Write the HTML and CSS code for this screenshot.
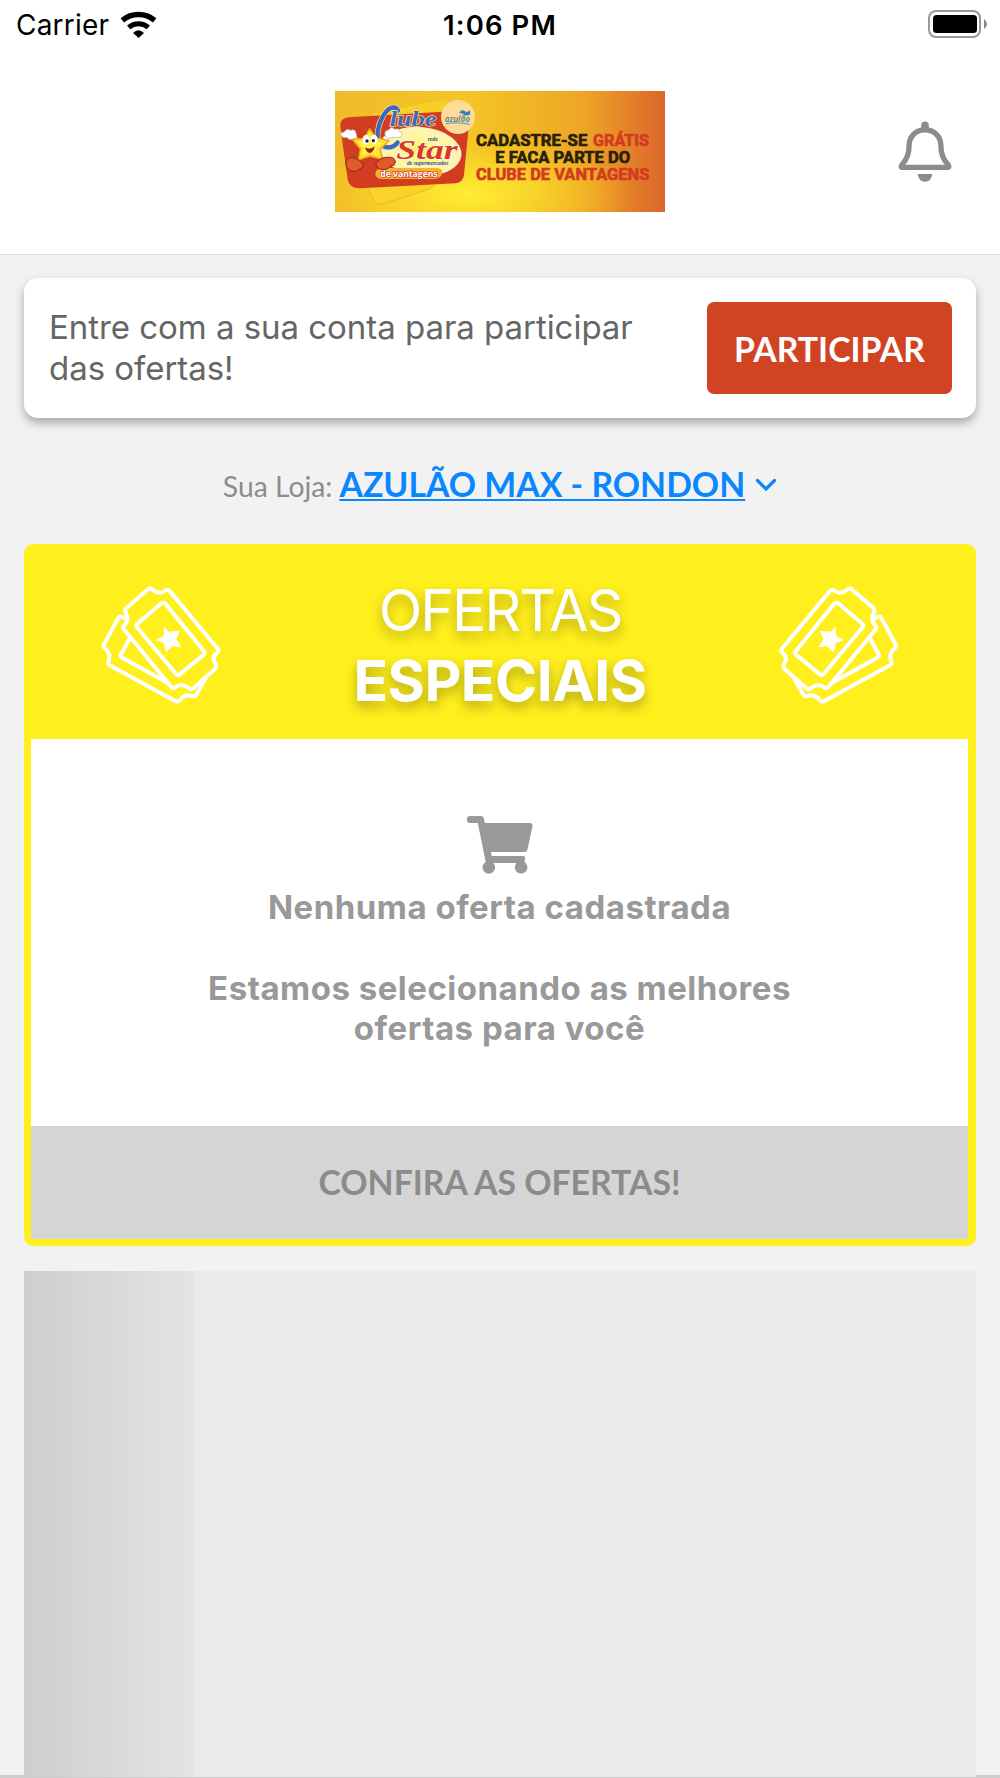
FILE: index.html
```html
<!DOCTYPE html>
<html lang="pt-BR">
<head>
    <meta charset="UTF-8">
    <meta name="viewport" content="width=device-width, initial-scale=1.0">
    <title>Clube Star - Ofertas</title>
    <link rel="stylesheet" href="styles.css">
</head>
<body>
    <header class="header">
        <div class="status-bar">
            <div class="carrier">
                <span>Carrier</span>
                <svg class="wifi" viewBox="360 30 111 81">
                    <path d="M367 58 A76 76 0 0 1 464 58" fill="none" stroke="#000" stroke-width="16"/>
                    <path d="M386 79 A45 45 0 0 1 445 79" fill="none" stroke="#000" stroke-width="15"/>
                    <path d="M399 96 Q415 79 432 96 L416 111 Z"/>
                </svg>
            </div>
            <div class="clock">1:06 PM</div>
            <svg class="battery" viewBox="0 0 60 28">
                <rect x="1" y="1" width="51" height="26" rx="7" fill="none" stroke="#999" stroke-width="2"/>
                <rect x="5" y="5" width="44" height="18" rx="3.5"/>
                <path d="M56 9 Q59 11 59 14 Q59 17 56 19 Z" fill="#888"/>
            </svg>
        </div>
        <div class="top-bar">
            <svg class="logo" viewBox="30 33 990 363">
                <defs>
                    <linearGradient id="banner" x1="0" x2="1">
                        <stop offset="0" stop-color="#f0ba2a"/>
                        <stop offset=".4" stop-color="#f5c526"/>
                        <stop offset=".75" stop-color="#eda625"/>
                        <stop offset="1" stop-color="#dc652b"/>
                    </linearGradient>
                    <radialGradient id="glow" cx=".4" cy=".85" r=".5">
                        <stop offset="0" stop-color="#ffee33"/>
                        <stop offset=".4" stop-color="#fde22e" stop-opacity=".7"/>
                        <stop offset="1" stop-color="#f8cc28" stop-opacity="0"/>
                    </radialGradient>
                    <radialGradient id="oval">
                        <stop offset="0" stop-color="#fff04a"/>
                        <stop offset=".55" stop-color="#fdf6a0"/>
                        <stop offset="1" stop-color="#fbf3b8"/>
                    </radialGradient>
                </defs>
                <rect x="30" y="33" width="990" height="363" fill="url(#banner)"/>
                <rect x="30" y="33" width="990" height="363" fill="url(#glow)"/>
                <path d="M140 102 L346 60 Q362 57 368 72 L380 110 L150 150 Z" fill="#f8cf25"/>
                <path d="M126 316 L338 306 L316 326 L176 371 Q154 379 146 362 Z" fill="#f9d327" stroke="#d5ae24" stroke-width="2"/>
                <path d="M72 112 L405 92 Q436 91 433 120 L417 284 Q415 306 391 310 L106 325 Q72 326 68 298 L46 142 Q43 114 72 112 Z" fill="#d23c20"/>
                <ellipse cx="288" cy="214" rx="122" ry="73" fill="url(#oval)" transform="rotate(6 288 214)"/>
                <path d="M151 282 Q151 264 176 264 L336 264 Q354 265 351 280 Q348 296 328 297 L176 297 Q151 297 151 282 Z" fill="#f4b32c"/>
                <g fill="none" stroke-linecap="round">
                    <path d="M219 92 C208 73 188 84 174 108 C157 138 153 172 164 188 C177 208 204 206 218 188" stroke="#f3d9a0" stroke-width="17"/>
                    <path d="M219 92 C208 73 188 84 174 108 C157 138 153 172 164 188 C177 208 204 206 218 188" stroke="#3c68b8" stroke-width="13"/>
                </g>
                <text class="logo-clube" x="194" y="138" textLength="140" lengthAdjust="spacingAndGlyphs">lube</text>
                <text class="logo-star" x="214" y="236" textLength="184" lengthAdjust="spacingAndGlyphs">Star</text>
                <text class="logo-small" x="308" y="184" textLength="30" lengthAdjust="spacingAndGlyphs">rede</text>
                <text class="logo-small" x="246" y="256" textLength="124" lengthAdjust="spacingAndGlyphs">de supermercados</text>
                <text class="logo-vantagens" x="166" y="291" textLength="172" lengthAdjust="spacingAndGlyphs">de vantagens</text>
                <circle cx="399" cy="111" r="51" fill="#fddb98"/>
                <text class="logo-azulao" x="359" y="127" textLength="76" lengthAdjust="spacingAndGlyphs">azulão</text>
                <path d="M402 98 Q412 86 420 94 Q427 99 434 90 L436 103 Q424 110 415 103 Q408 98 402 98 Z" fill="#3481bd"/>
                <path d="M363 131 Q394 125 435 133" fill="none" stroke="#4b9acb" stroke-width="3"/>
                <!-- estrela mascote -->
                <g stroke-linejoin="round">
                    <path d="M95 177 L70 161 M176 177 L205 160" stroke="#fff" stroke-width="12"/>
                    <path d="M48 166 Q44 155 57 157 Q65 143 76 151 Q91 146 93 159 Q100 172 84 178 Q72 183 66 172 Q54 177 48 166 Z" fill="#fff" stroke="#aaa" stroke-width="2"/>
                    <path d="M180 166 Q177 151 190 151 Q199 136 209 148 Q222 143 224 155 Q237 161 226 171 Q213 174 202 171 Q187 181 180 166 Z" fill="#fff" stroke="#aaa" stroke-width="2"/>
                    <path d="M134 146 L152 173 L192 182 L166 208 L172 238 L135 228 L100 240 L106 207 L82 178 L118 175 Z" fill="#ffdf2f" stroke="#eaa51f" stroke-width="4"/>
                    <path d="M134 158 L146 183 L174 190 L153 206 L157 225 L135 217 L111 225 L116 204 L97 187 L122 183 Z" fill="#fff04b"/>
                    <ellipse cx="123" cy="179" rx="10" ry="14" fill="#fff"/>
                    <ellipse cx="147" cy="178" rx="10" ry="14" fill="#fff"/>
                    <circle cx="126" cy="183" r="5" fill="#222"/>
                    <circle cx="145" cy="182" r="5" fill="#222"/>
                    <path d="M120 202 Q134 212 149 199 Q146 219 133 219 Q123 216 120 202 Z" fill="#9a241c"/>
                    <path d="M72 234 Q94 230 109 246 Q122 262 103 267 Q90 280 73 270 Q58 258 64 242 Z" fill="#e25a2c" stroke="#8c2b18" stroke-width="3"/>
                    <path d="M152 252 Q162 234 184 232 Q211 229 211 246 Q210 258 197 258 Q188 272 165 267 Q154 265 152 252 Z" fill="#e25a2c" stroke="#8c2b18" stroke-width="3"/>
                </g>
                <g class="logo-title">
                    <text x="453" y="198" textLength="334" lengthAdjust="spacingAndGlyphs">CADASTRE-SE</text>
                    <text class="red" x="804" y="198" textLength="168" lengthAdjust="spacingAndGlyphs">GRÁTIS</text>
                    <text x="511" y="249" textLength="405" lengthAdjust="spacingAndGlyphs">E FACA PARTE DO</text>
                    <text class="red" x="453" y="300" textLength="520" lengthAdjust="spacingAndGlyphs">CLUBE DE VANTAGENS</text>
                </g>
            </svg>
            <svg class="bell" viewBox="114 362 162 184">
                <path d="M195 375 V393" stroke="#8c8c8c" stroke-width="23" stroke-linecap="round"/>
                <path d="M195 389 C165 389 147 410 147 437 C147 466 139 480 126 493 Q119 502 128 502 H262 Q271 502 264 493 C251 480 243 466 243 437 C243 410 225 389 195 389 Z" fill="#fff" stroke="#8c8c8c" stroke-width="16" stroke-linejoin="round"/>
                <path d="M173 522 H217 Q214 545 195 545 Q176 545 173 522 Z" fill="#8c8c8c"/>
            </svg>
        </div>
    </header>

    <main class="content">
        <section class="login-card">
            <p>Entre com a sua conta para participar<br>das ofertas!</p>
            <button class="btn-participar">PARTICIPAR</button>
        </section>

        <div class="store">
            <span class="store-label">Sua Loja:</span>
            <a class="store-name" href="#">AZULÃO MAX - RONDON</a>
            <svg class="chevron" viewBox="0 0 22 14">
                <path d="M2.5 2.5 L11 11 L19.5 2.5" fill="none" stroke="#0a87ff" stroke-width="3.2" stroke-linecap="round"/>
            </svg>
        </div>

        <section class="offers">
            <div class="offers-head">
                <svg class="tickets" viewBox="300 165 365 360">
                    <g id="ticket-art" fill="none" stroke="#fff" stroke-width="12" stroke-linejoin="round" stroke-linecap="round">
                        <path d="M445 177 Q453 172 459 180 Q478 195 496 182 Q504 177 510 184 L654 357 Q658 363 651 369 Q634 383 646 400 Q652 411 645 417 L578 476 Q572 480 566 474 Q545 457 526 472 Q519 477 514 471 L371 297 Q367 291 373 286 Q389 270 378 250 Q372 241 379 234 Z"/>
                        <path d="M484 220 Q491 216 497 222 L612 364 Q616 370 610 375 L539 433 Q533 438 528 432 L411 292 Q407 286 412 281 Z"/>
                        <path d="M378 266 L364 260 Q358 259 355 264 L312 343 Q308 349 314 354 Q334 370 325 395 Q323 402 328 405 L524 512 Q533 517 539 511 Q554 491 577 498 Q585 501 589 494 L619 440"/>
                        <path d="M391 322 L363 373 Q360 379 367 383 L504 459"/>
                        <path d="M494 293 L506 307 L538 304 L527 327 L542 350 L517 347 L499 365 L493 338 L470 330 L492 319 Z" fill="#fff" stroke-width="3"/>
                    </g>
                </svg>
                <h1><span>OFERTAS</span><br><b>ESPECIAIS</b></h1>
                <svg class="tickets flip" viewBox="300 165 365 360">
                    <use href="#ticket-art"/>
                </svg>
            </div>
            <div class="offers-body">
                <svg class="cart" viewBox="0 0 66 60">
                    <path d="M3 1 H14 Q16.500 1 17 3.500 L17.800 8 H63 Q66 8 65.500 11 L60.500 34.500 Q60 37 57.500 37 H24 L24.700 41 H56.500 Q58.500 41 58 44 L57.500 47 A6.300 6.300 0 1 1 49.500 48 H26.300 A6.300 6.300 0 1 1 18.700 47 L10.800 8 H3 Q0 8 0 5 V4 Q0 1 3 1 Z" fill="#999"/>
                </svg>
                <p>Nenhuma oferta cadastrada</p>
                <p class="wait">Estamos selecionando as melhores<br>ofertas para você</p>
            </div>
            <button class="btn-offers" disabled>CONFIRA AS OFERTAS!</button>
        </section>

        <div class="skeleton">
            <div class="shine"></div>
        </div>
    </main>
    <div class="tab-line"></div>
</body>
</html>
```
FILE: styles.css
```css
* {
    box-sizing: border-box;
}
body {
    margin: 0;
    height: 1778px;
    display: flex;
    flex-direction: column;
    overflow: hidden;
    background: #f2f2f2;
    font-family: Inter, sans-serif;
}
p, h1 {
    margin: 0;
}
button {
    border: none;
    padding: 0;
    font-family: Lato, sans-serif;
    font-weight: bold;
    font-size: 33.8px;
}

/* topo */
.header {
    height: 255px;
    background: #fff;
    border-bottom: 1px solid #dedede;
}
.status-bar {
    display: grid;
    grid-template-columns: 1fr auto 1fr;
    align-items: center;
    height: 50px;
    padding: 0 16px;
    font-size: 28px;
    color: #000;
}
.carrier {
    display: flex;
    align-items: center;
    gap: 11px;
    letter-spacing: 0.2px;
}
.wifi {
    width: 37px;
    height: 27px;
    margin-top: -2px;
}
.clock {
    font-weight: 600;
    font-size: 27.5px;
    letter-spacing: 1.1px;
}
.battery {
    width: 60px;
    height: 28px;
    justify-self: end;
    margin-top: -2px;
    margin-right: -4px;
}
.top-bar {
    display: grid;
    grid-template-columns: 1fr 330px 1fr;
    align-items: center;
    height: 203px;
    padding-right: 48px;
    padding-left: 48px;
}
.logo {
    grid-column: 2;
    width: 330px;
    height: 121px;
}
.bell {
    width: 54px;
    height: 61px;
    justify-self: end;
}
.logo-clube {
    font: italic bold 62px "Liberation Serif", serif;
    fill: #3c68b8;
    stroke: #f3d9a0;
    stroke-width: 4px;
    paint-order: stroke;
}
.logo-star {
    font: italic bold 84px "Liberation Serif", serif;
    fill: #d8392a;
    stroke: #fff;
    stroke-width: 3px;
    paint-order: stroke;
}
.logo-small {
    font: italic bold 17px "Liberation Serif", serif;
    fill: #284fa5;
}
.logo-vantagens {
    font: bold 25px "Open Sans", sans-serif;
    fill: #fff;
    stroke: #d03a20;
    stroke-width: 4px;
    paint-order: stroke;
}
.logo-azulao {
    font: italic bold 28px "Open Sans", sans-serif;
    fill: #6f8d91;
}
.logo-title {
    font: bold 51px Roboto, sans-serif;
    fill: #2a2007;
    stroke: #2a2007;
    stroke-width: 2px;
    stroke-linejoin: round;
}
.logo-title .red {
    fill: #d23b20;
    stroke: #d23b20;
}

/* conteudo */
.content {
    flex: 1;
    min-height: 0;
    display: flex;
    flex-direction: column;
    padding: 23px 24px 0;
}
.login-card {
    display: flex;
    align-items: center;
    justify-content: space-between;
    height: 140px;
    padding: 0 24px 0 25px;
    background: #fff;
    border-radius: 14px;
    box-shadow: 0 5px 10px rgba(0, 0, 0, .3);
}
.login-card p {
    font-size: 33px;
    line-height: 40.6px;
    letter-spacing: -0.04px;
    color: #666;
}
.btn-participar {
    width: 245px;
    height: 92px;
    padding-top: 2px;
    background: #d04423;
    color: #fff;
    border-radius: 7px;
}
.store {
    display: flex;
    align-items: baseline;
    justify-content: center;
    height: 126px;
    padding-top: 46px;
    font-family: Lato, sans-serif;
    line-height: 40px;
}
.store-label {
    font-size: 28.3px;
    color: #8c8c8c;
    margin-right: 7px;
}
.store-name {
    font-size: 33.8px;
    font-weight: bold;
    color: #0a87ff;
    text-decoration-thickness: 2px;
    text-underline-offset: 2px;
    text-decoration-skip-ink: none;
}
.chevron {
    width: 22px;
    height: 14px;
    margin-left: 10px;
    align-self: flex-start;
    margin-top: 14px;
}

/* ofertas */
.offers {
    height: 702px;
    display: flex;
    flex-direction: column;
    background: #ffef1d;
    border-radius: 9px;
    padding: 0 8px 7px 7px;
}
.offers-head {
    display: flex;
    align-items: center;
    justify-content: space-between;
    height: 195px;
    padding: 7px 68px 0 69px;
}
.tickets {
    width: 121.67px;
    height: 120px;
}
.flip {
    transform: scaleX(-1);
}
.offers-head h1 {
    padding-top: 2px;
    color: #fff;
    font-size: 57px;
    font-weight: 400;
    line-height: 69.6px;
    text-align: center;
    text-shadow: 0 6px 12px rgba(0, 0, 0, .3);
}
.offers-head span {
    letter-spacing: -1.9px;
}
.offers-head b {
    font-weight: 700;
    letter-spacing: -0.5px;
}
.offers-body {
    flex: 1;
    display: flex;
    flex-direction: column;
    align-items: center;
    padding-top: 76px;
    background: #fff;
    color: #999;
    font-size: 33px;
    font-weight: 700;
    letter-spacing: 0.5px;
    line-height: 40.6px;
    text-align: center;
}
.cart {
    width: 66px;
    height: 60px;
    margin-bottom: 12px;
}
.wait {
    margin-top: 40px;
}
.btn-offers {
    height: 113px;
    padding-bottom: 1px;
    background: #d5d5d5;
    color: #8b8b8b;
}

/* carregando */
.skeleton {
    flex: 1;
    margin: 25px 0 -2px;
    background: #ebebeb;
    position: relative;
}
.shine {
    width: 170px;
    height: 100%;
    background: linear-gradient(to right, #cecece, #e4e4e4);
}
.tab-line {
    height: 3px;
    background: #cecece;
}
```
